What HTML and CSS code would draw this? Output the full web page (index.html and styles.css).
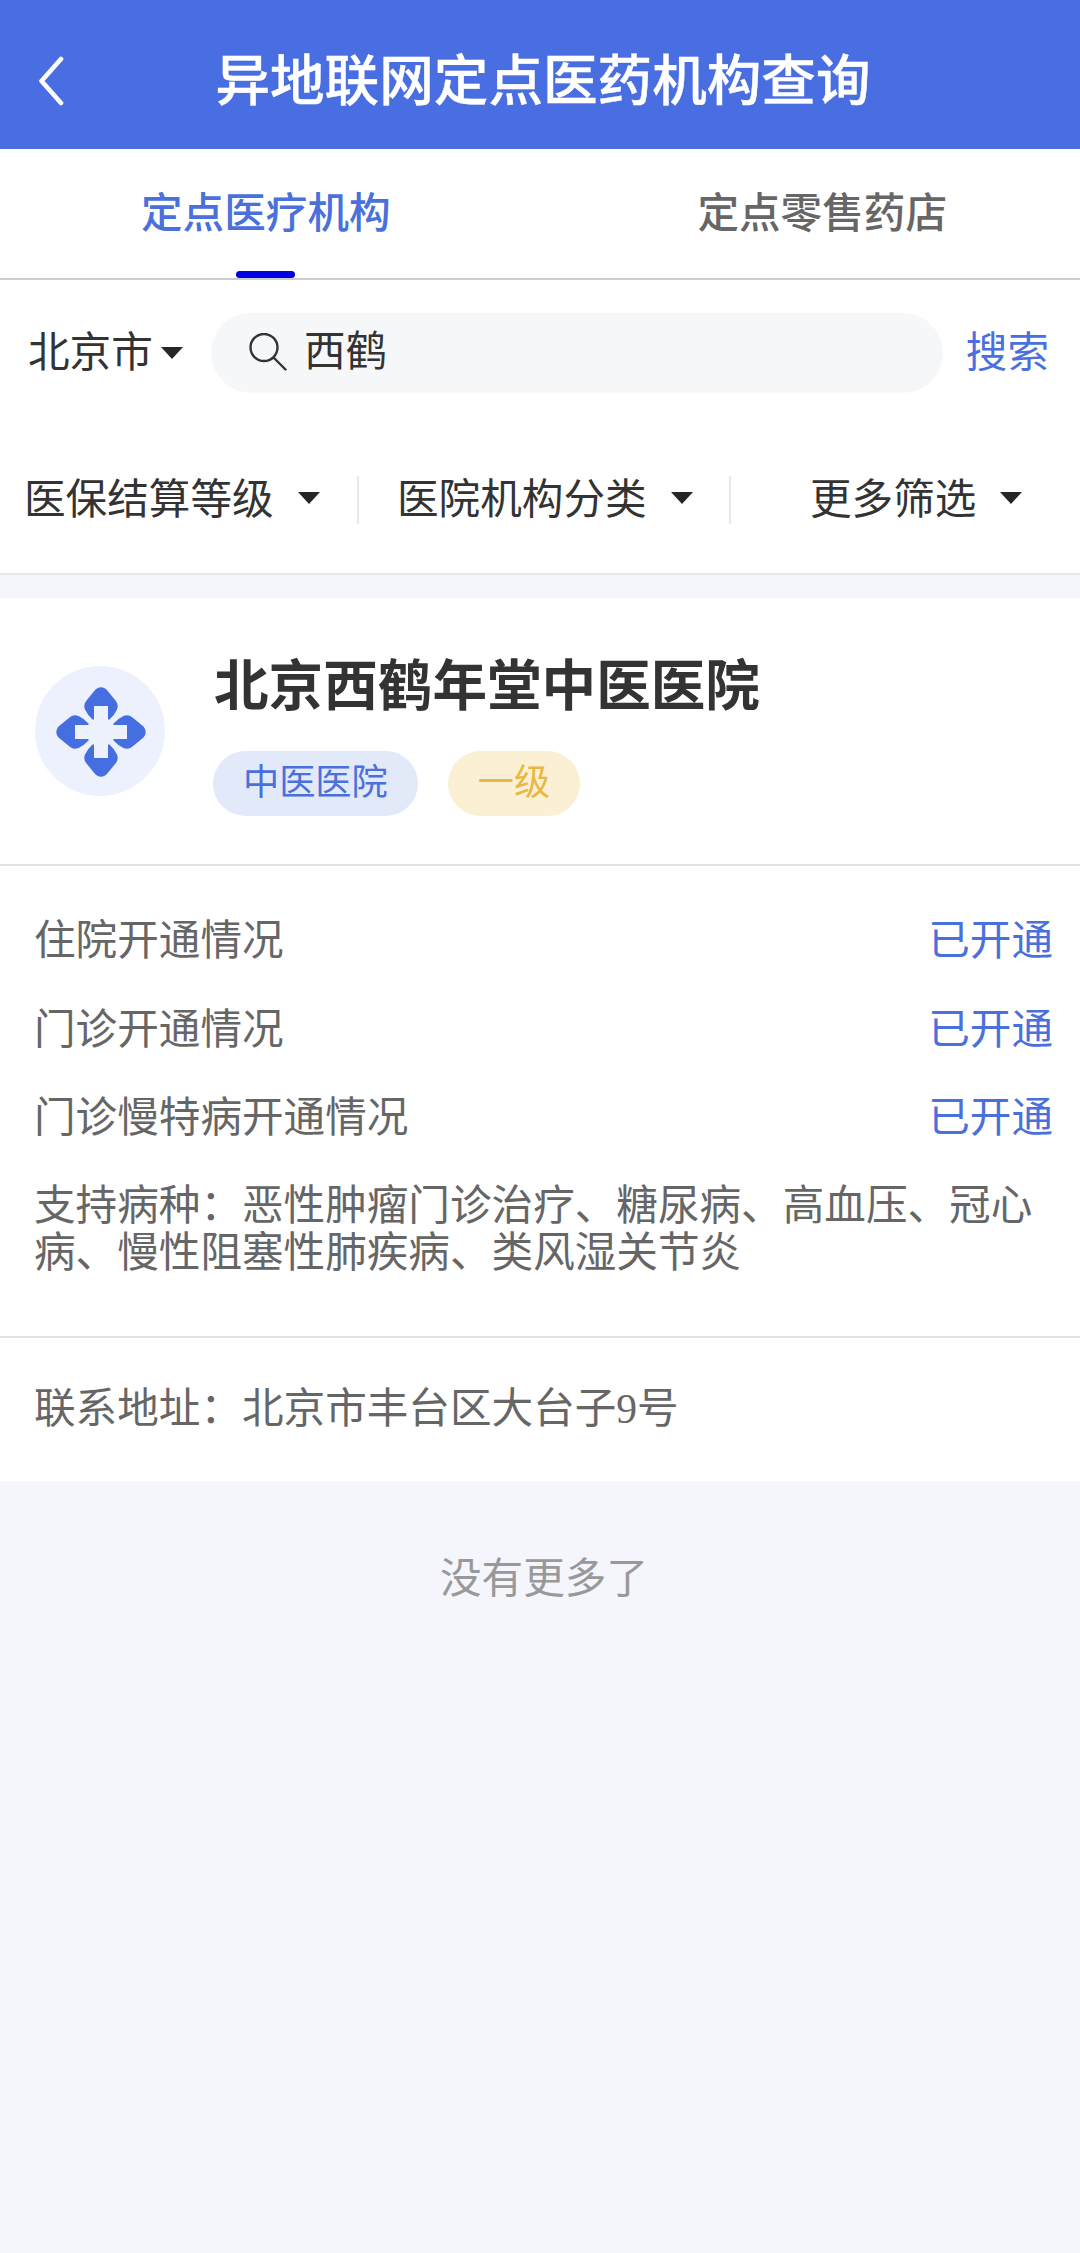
FILE: index.html
```html
<!DOCTYPE html>
<html lang="zh-CN">
<head>
  <meta charset="UTF-8" />
  <meta name="viewport" content="width=device-width, initial-scale=1.0" />
  <title>异地联网定点医药机构查询</title>
  <link rel="stylesheet" href="styles.css">
</head>
<body>
  <header class="navbar">
    <svg class="back" viewBox="0 0 28 50" fill="none" stroke="#fff" stroke-width="4.6" stroke-linecap="round" stroke-linejoin="round">
      <path d="M23 3 3.500 25 23 47" />
    </svg>
    <h1>异地联网定点医药机构查询</h1>
  </header>

  <nav class="tabs">
    <a class="tab active">定点医疗机构</a>
    <a class="tab">定点零售药店</a>
  </nav>

  <section class="search">
    <div class="city">北京市<i class="caret"></i></div>
    <div class="search-box">
      <svg class="search-icon" viewBox="0 0 38 38" fill="none" stroke="#333" stroke-width="2.4" stroke-linecap="round">
        <circle cx="15" cy="14.500" r="13.500" />
        <path d="M25 25 36.500 36.500" />
      </svg>
      <span>西鹤</span>
    </div>
    <a class="search-btn">搜索</a>
  </section>

  <section class="filters">
    <div class="filter">医保结算等级<i class="caret"></i></div>
    <div class="filter">医院机构分类<i class="caret"></i></div>
    <div class="filter more">更多筛选<i class="caret"></i></div>
  </section>

  <main class="card">
    <div class="card-head">
      <div class="logo">
        <svg viewBox="0 0 90 90">
          <g fill="#456fe0">
            <path id="petal" d="M39.500 2.500Q45-2 50.500 2.500L59.500 13.500Q63 17.500 61 22.500Q58.500 28 53.500 32.500H36.500Q31.500 28 29 22.500Q27 17.500 30.500 13.500Z" />
            <use href="#petal" transform="rotate(90 45 45)" />
            <use href="#petal" transform="rotate(180 45 45)" />
            <use href="#petal" transform="rotate(270 45 45)" />
          </g>
          <path fill="#ecf1fd" d="M38 19h14v19h19v14H52v19H38V52H19V38h19z" />
        </svg>
      </div>
      <div class="info">
        <h2>北京西鹤年堂中医医院</h2>
        <div class="tags">
          <span class="tag type">中医医院</span>
          <span class="tag level">一级</span>
        </div>
      </div>
    </div>

    <div class="card-body">
      <div class="row"><span>住院开通情况</span><span class="status">已开通</span></div>
      <div class="row"><span>门诊开通情况</span><span class="status">已开通</span></div>
      <div class="row"><span>门诊慢特病开通情况</span><span class="status">已开通</span></div>
      <p class="diseases">支持病种：恶性肿瘤门诊治疗、糖尿病、高血压、冠心病、慢性阻塞性肺疾病、类风湿关节炎</p>
    </div>

    <div class="address">联系地址：北京市丰台区大台子9号</div>
  </main>

  <p class="no-more">没有更多了</p>
</body>
</html>
```
FILE: styles.css
```css
* {
  box-sizing: border-box;
}
body {
  margin: 0;
  min-height: 100vh;
  background-color: #f4f6fc;
  font-family: "Liberation Serif", "Noto Sans CJK SC", serif;
  font-size: 41.6px;
  line-height: 48px;
  color: #333;
}
h1, h2, p {
  margin: 0;
}

/* Top bar */
.navbar {
  height: 149px;
  padding: 13px 38px 0;
  display: flex;
  align-items: center;
  background-color: #486ee1;
  color: #fff;
}
.back {
  width: 28px;
  height: 50px;
}
.navbar h1 {
  flex: 1;
  padding: 2px 22px 0 0;
  text-align: center;
  font-size: 54.6px;
  line-height: 64px;
  font-weight: 500;
  -webkit-text-stroke: 0.4px;
}

/* Tabs */
.tabs {
  height: 131px;
  padding: 0 133px 0 141px;
  display: flex;
  justify-content: space-between;
  background-color: #fff;
  border-bottom: 2px solid #ccc;
}
.tab {
  padding-top: 41px;
  font-weight: 500;
  color: #666;
}
.tab.active {
  display: flex;
  flex-direction: column;
  align-items: center;
  justify-content: space-between;
  color: #4a70dc;
}
.tab.active::after {
  content: "";
  width: 59px;
  height: 7px;
  border-radius: 4px;
  background-color: #0000e0;
}

/* Search bar */
.search {
  height: 146px;
  padding: 0 31px 0 28px;
  display: flex;
  align-items: center;
  background-color: #fff;
}
.city {
  width: 183px;
  display: flex;
  align-items: center;
}
.caret {
  border: 11px solid transparent;
  border-top: 12px solid #262626;
  border-bottom: 0;
}
.city .caret {
  margin-left: 8px;
}
.search-box {
  width: 732px;
  height: 80px;
  padding: 0 0 2px 38px;
  display: flex;
  align-items: center;
  gap: 17px;
  border-radius: 40px;
  background-color: #f6f7f9;
}
.search-icon {
  width: 38px;
  height: 38px;
}
.search-btn {
  margin-left: auto;
  color: #4a70e0;
}

/* Filter bar */
.filters {
  height: 149px;
  padding-top: 50px;
  display: flex;
  background-color: #fff;
  border-bottom: 2px solid #e9e9eb;
}
.filter {
  width: 372px;
  height: 48px;
  padding-left: 38px;
  display: flex;
  align-items: center;
  border-right: 2px solid #e8e8e8;
}
.filter:first-child {
  width: 359px;
  padding-left: 24px;
}
.filter.more {
  width: 349px;
  padding-left: 79px;
  border-right: 0;
}
.filter .caret {
  margin: 0 0 5px 24px;
}

/* Hospital card */
.card {
  margin-top: 23px;
  background-color: #fff;
}
.card-head {
  height: 268px;
  padding: 52px 35px 0;
  display: flex;
  gap: 48px;
  border-bottom: 2px solid #e2e2e2;
}
.logo {
  width: 130px;
  height: 130px;
  margin-top: 16px;
  display: flex;
  align-items: center;
  justify-content: center;
  border-radius: 50%;
  background-color: #ecf1fd;
}
.logo svg {
  width: 90px;
  height: 90px;
  margin-left: 2px;
  margin-top: 1px;
}
.info h2 {
  padding: 5px 0 0 1px;
  font-size: 54.6px;
  line-height: 64px;
  font-weight: 700;
}
.tags {
  margin-top: 32px;
  display: flex;
  gap: 30px;
}
.tag {
  height: 65px;
  padding: 0 30px;
  border-radius: 33px;
  font-size: 36.2px;
  line-height: 65px;
}
.tag.type {
  background-color: #e2e9f9;
  color: #4a70dc;
}
.tag.level {
  background-color: #fcf0d4;
  color: #e8b845;
}
.card-body {
  height: 472px;
  padding: 51px 27px 0 34px;
  color: #666;
  border-bottom: 2px solid #e2e2e2;
}
.row {
  height: 88.500px;
  display: flex;
  justify-content: space-between;
}
.status {
  color: #4a70dc;
}
.diseases {
  line-height: 47px;
}
.address {
  height: 143px;
  padding: 47px 34px 0;
  color: #666;
}
.no-more {
  padding: 74px 0 0 8px;
  text-align: center;
  color: #999;
}
```
